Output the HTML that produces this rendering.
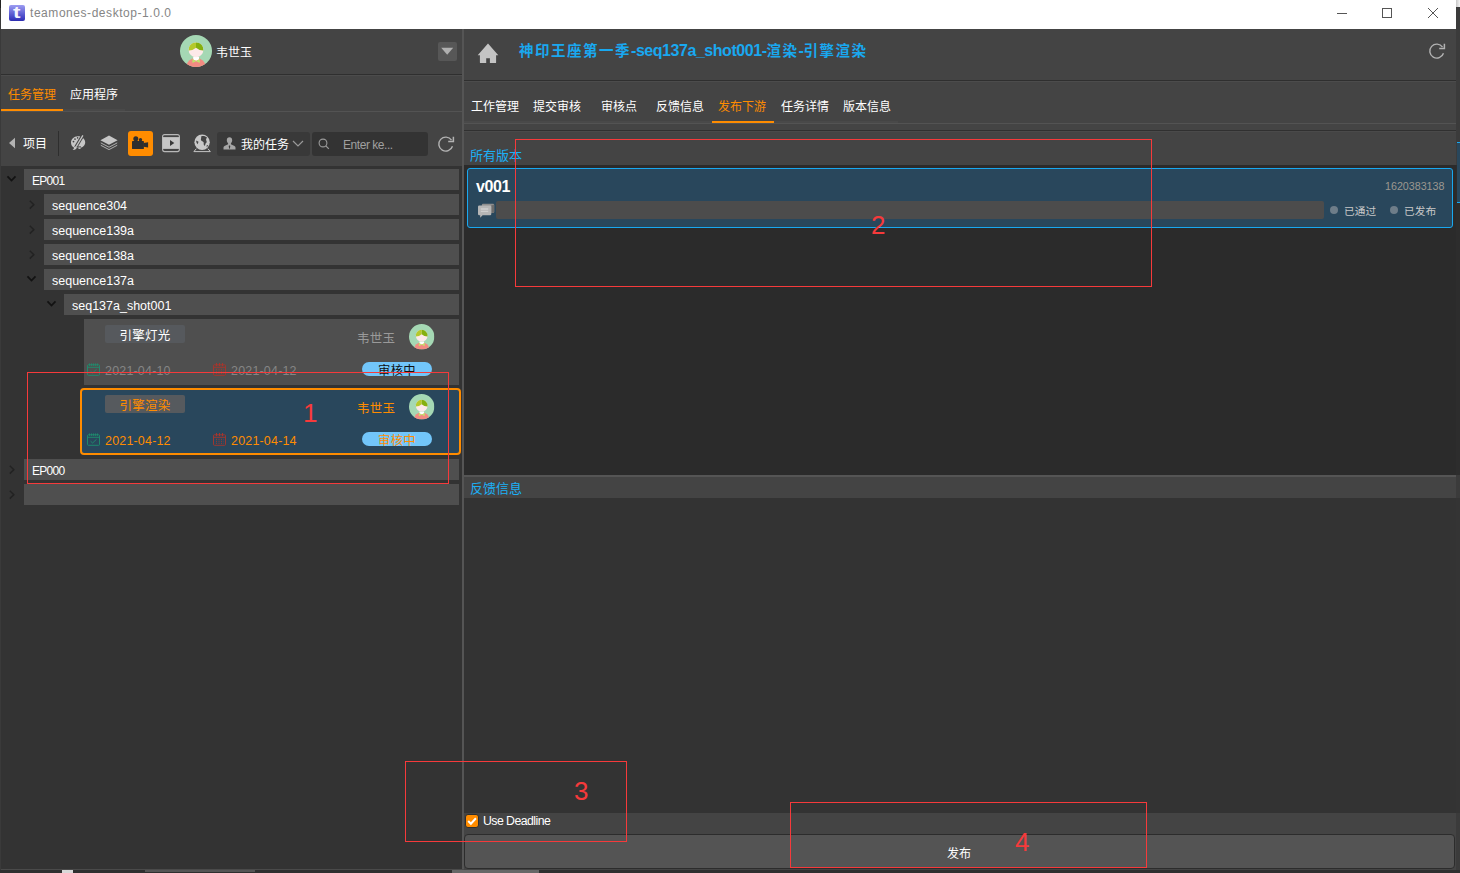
<!DOCTYPE html>
<html><head><meta charset="utf-8"><title>teamones-desktop-1.0.0</title>
<style>
*{box-sizing:border-box;margin:0;padding:0}
html,body{width:1460px;height:873px;overflow:hidden;background:#3c3c3c}
body{font-family:"Liberation Sans","Noto Sans CJK SC",sans-serif;font-size:12px;color:#fff;position:relative}
.a{position:absolute}
.t{position:absolute;white-space:nowrap;line-height:16px;height:16px;font-size:12px}
.row{position:absolute;height:21px;background:#4f4f4f}
.row span{position:absolute;left:8px;top:4px;line-height:16px;font-size:12.5px;white-space:nowrap;color:#fff}
.red{position:absolute;border:1px solid #f63a3b}
.num{position:absolute;color:#f63a3b;font-size:26px;line-height:28px;height:28px}
svg{position:absolute;overflow:visible}
.lbl{position:absolute;width:80px;height:18px;background:#56595d;border-radius:2px;text-align:center;line-height:23px;font-size:12.5px;letter-spacing:.3px;overflow:hidden}
.pill{position:absolute;width:70px;height:14px;border-radius:7px;background:#72c6fa;overflow:hidden;text-align:center;font-size:12.3px;line-height:19px;letter-spacing:.4px}
.date{position:absolute;font-size:12.5px;line-height:16px;white-space:nowrap;letter-spacing:.18px}
.cj{font-size:14.5px;letter-spacing:1.5px}
.la{letter-spacing:-.45px}
</style></head><body>
<div class="a" style="left:1456px;top:0;width:4px;height:7px;background:linear-gradient(90deg,#c8c8c8,#f4f4f4)"></div>
<div class="a" style="left:1456px;top:7px;width:4px;height:863px;background:#3b3b3b"></div>
<div class="a" style="left:1456px;top:165px;width:4px;height:310px;background:#2d2d2d"></div>
<div class="a" style="left:1457px;top:142px;width:3px;height:61px;background:#29475c;border-top:1px solid #19a8f0;border-bottom:1px solid #19a8f0"></div>
<div class="a" style="left:1456px;top:498px;width:4px;height:315px;background:#343434"></div>
<div class="a" style="left:0;top:0;width:1px;height:873px;background:#3a3a3a"></div>
<div class="a" style="left:0;top:0;width:1px;height:8px;background:#222"></div>
<div class="a" style="left:0;top:870px;width:1460px;height:3px;background:#2f2f2f"></div>
<div class="a" style="left:62px;top:870px;width:11px;height:3px;background:#d8d8d8"></div>
<div class="a" style="left:452px;top:870px;width:87px;height:3px;background:#676767"></div>
<div class="a" style="left:145px;top:870px;width:110px;height:2px;background:#555"></div>
<!-- window -->
<div class="a" style="left:1px;top:0;width:1455px;height:870px;background:#444"></div>
<!-- title bar -->
<div class="a" style="left:1px;top:0;width:1455px;height:29px;background:#fff"></div>
<div class="a" style="left:9px;top:5px;width:16px;height:16px;border-radius:2px;background:linear-gradient(#9c9cf2,#3d3dc2 85%,#2c2cae);color:#f4f4ff;font-weight:bold;font-size:16px;line-height:15px;text-align:center;overflow:hidden"><span style="display:inline-block;transform:scaleX(1.4)">t</span></div>
<div class="t" style="left:30px;top:5px;color:#858585;font-size:12px;letter-spacing:.55px">teamones-desktop-1.0.0</div>
<svg style="left:1330px;top:0" width="126" height="29" viewBox="0 0 126 29"><g stroke="#555" stroke-width="1" fill="none"><path d="M7 13.5h10"/><rect x="52.5" y="8.5" width="9" height="9"/><path d="M98 8l10 10M108 8l-10 10"/></g></svg>
<!--LEFT-->
<svg width="0" height="0" style="left:0;top:0"><defs>
<symbol id="av" viewBox="0 0 32 32"><clipPath id="avc"><circle cx="16" cy="16" r="16"/></clipPath><circle cx="16" cy="16" r="16" fill="#a5d8b4"/><g clip-path="url(#avc)"><ellipse cx="16" cy="31.5" rx="9.6" ry="8.4" fill="#f28b82"/><path d="M13.2 22h5.8v2.6l-2.9 1.2-2.9-1.2z" fill="#fff"/><path d="M12.4 24l3.7 1.9 3.7-1.9v3.9l-3.7-1.6-3.7 1.6z" fill="#bfe56a"/><circle cx="16" cy="14.8" r="7.4" fill="#fde9e9"/><path d="M8.6 15.6A7.4 7.4 0 0 1 16 7.4V12.8Q13 15.6 8.6 15.6z" fill="#b4c92c"/><path d="M23.4 15.6A7.4 7.4 0 0 0 16 7.4V12.8Q19 15.6 23.4 15.6z" fill="#84b00e"/></g></symbol>
<symbol id="cal" viewBox="0 0 13 13"><g fill="none" stroke="currentColor" stroke-width=".9"><rect x=".5" y="1.800" width="12" height="10.500" rx=".8"/><path d="M.5 4.300h12"/></g></symbol>
</defs></svg>
<!-- left header -->
<svg style="left:180px;top:35px" width="32" height="32"><use href="#av"/></svg>
<div class="t" style="left:216px;top:45px;font-size:12px">韦世玉</div>
<div class="a" style="left:438px;top:42px;width:19px;height:19px;border-radius:2px;background:#575757"></div>
<svg style="left:438px;top:42px" width="19" height="19"><path d="M3.200 5.800h12l-6 7z" fill="#b0b0b0"/></svg>
<div class="a" style="left:1px;top:74px;width:461px;height:1px;background:#2f2f2f"></div>
<div class="a" style="left:1px;top:75px;width:461px;height:1px;background:#4c4c4c"></div>
<!-- left tabs -->
<div class="t" style="left:8px;top:87px;color:#ff8c00">任务管理</div>
<div class="t" style="left:70px;top:87px">应用程序</div>
<div class="a" style="left:1px;top:111px;width:461px;height:1px;background:#535353"></div>
<div class="a" style="left:63px;top:109px;width:62px;height:2px;background:#494949"></div>
<div class="a" style="left:1px;top:109px;width:62px;height:2px;background:#ff8c00"></div>
<!-- toolbar -->
<svg style="left:8px;top:137px" width="8" height="12"><path d="M1 6L7 .8v10.4z" fill="#b2b2b2"/></svg>
<div class="t" style="left:23px;top:136px">项目</div>
<div class="a" style="left:58px;top:131px;width:1px;height:25px;background:#2e2e2e"></div>
<!--ICONS-->
<svg style="left:70px;top:135px" width="16" height="16" viewBox="0 0 16 16"><path d="M7.800 1.200C3.800 1.200 1 4.200 1 7.600c0 2.700 1.300 4.600 2.800 4.800 1 .1 1.500-.5 2.300-.5s1.300.9 3.100.9c3.300 0 6-2 6-5.500S12 1.200 7.800 1.200z" fill="#c6c6c6"/><circle cx="3.500" cy="6.600" r=".9" fill="#444"/><circle cx="5" cy="4.100" r=".85" fill="#444"/><circle cx="7.600" cy="2.900" r=".8" fill="#444"/><path d="M13.200 -.4L5.300 13" stroke="#444" stroke-width="3.300"/><path d="M12.900 .3L6.200 11.700" stroke="#c6c6c6" stroke-width="1.300"/><path d="M6.200 11.300c-1.300-.4-2.300.4-2.300 1.600 0 1-.7 1.700-1.500 2 1.900.6 4-.3 4.500-2.300z" fill="#c6c6c6"/><path d="M8 11.400h3v1.400h-3z" fill="#444"/><path d="M8.400 12.500l2.200-.2.200 1.300c-.9.500-1.900.4-2.600-.1z" fill="#c6c6c6"/></svg>
<svg style="left:100px;top:135px" width="18" height="16" viewBox="0 0 18 16"><path d="M9 .6L17.600 5.200 9 9.800.4 5.200z" fill="#c6c6c6"/><path d="M.8 7.900L9 12.200l8.200-4.300M.8 10.300L9 14.600l8.200-4.300" stroke="#b4b4b4" stroke-width=".95" fill="none"/></svg>
<div class="a" style="left:128px;top:131px;width:25px;height:25px;border-radius:3px;background:#ff8c00"></div>
<svg style="left:128px;top:131px" width="25" height="25" viewBox="0 0 25 25"><g fill="#2e2e2e"><rect x="4" y="9.900" width="11.900" height="8.200" rx=".7"/><circle cx="7.800" cy="7.700" r="2.500"/><circle cx="12.500" cy="8.700" r="1.700"/><path d="M15.500 12l4.600-.7v5.200l-4.600-.7z"/></g></svg>
<svg style="left:162px;top:134px" width="18" height="18" viewBox="0 0 18 18"><rect x=".6" y=".6" width="16.800" height="17" rx="2" fill="none" stroke="#b8b8b8" stroke-width="1.100"/><rect x=".6" y="3.100" width="16.800" height="11.800" fill="#c6c6c6"/><path d="M8 5.900v6.200l4.300-3.100z" fill="#3a3a3a"/></svg>
<svg style="left:193px;top:134px" width="18" height="18" viewBox="0 0 18 18"><circle cx="9.100" cy="8.200" r="7.700" fill="#c8c8c8"/><path d="M8.300 2.300c2-.7 4.300-.1 5.800 1.400-.9.700-1.300 1.700-.8 2.700.6 1.100.5 2-.3 2.700-.8.700-.5 1.800-1.200 2.700-.9-.5-1.300-1.500-1.100-2.600.2-1-.6-1.600-1.500-2C8.200 6.700 7.600 5.900 8 4.900c.3-.8.100-1.700.3-2.600z" fill="#444"/><path d="M3.200 6.500l2.300 1.300-.9 2.400C3.700 9.300 3.100 7.900 3.200 6.500z" fill="#444"/><path d="M13.700 11.300l1.500-.4c-.3.900-.8 1.700-1.500 2.300z" fill="#444"/><path d="M3.300 14.700L.9 17.600h16.400l-2.400-2.900" fill="none" stroke="#c4c4c4" stroke-width="1"/></svg>
<!--/ICONS-->
<div class="a" style="left:217px;top:132px;width:93px;height:24px;border-radius:3px;background:#393939"></div>
<svg style="left:223px;top:137px" width="13" height="13" viewBox="0 0 13 13"><path d="M6.5 0.3c1.7 0 2.7 1.3 2.7 3 0 1.400-.7 2.500-1.300 3.100v.8l3.600 1.700c.7.400 1 1 1 1.700v1.900H.5v-1.900c0-.7.300-1.300 1-1.700l3.600-1.700v-.8C4.500 5.800 3.800 4.700 3.800 3.300c0-1.700 1-3 2.700-3z" fill="#a6a6a6"/><path d="M6.500 8.200l.8.800-.5 2.700h-.6l-.5-2.700z" fill="#393939"/></svg>
<div class="t" style="left:241px;top:137px">我的任务</div>
<svg style="left:292px;top:140px" width="12" height="8"><path d="M1 1l5 5 5-5" fill="none" stroke="#9a9a9a" stroke-width="1.200"/></svg>
<div class="a" style="left:312px;top:132px;width:116px;height:24px;border-radius:3px;background:#333"></div>
<svg style="left:318px;top:138px" width="12" height="12" viewBox="0 0 12 12"><circle cx="5" cy="5" r="3.900" fill="none" stroke="#9a9a9a" stroke-width="1.100"/><path d="M7.800 7.800l3 3" stroke="#9a9a9a" stroke-width="1.200"/></svg>
<div class="t" style="left:343px;top:137px;color:#a0a0a0;font-size:12px;letter-spacing:-.45px">Enter ke...</div>
<svg style="left:437px;top:135px" width="17" height="17" viewBox="0 0 17 17"><path d="M14.530 5.080A7 7 0 1 0 15.460 11.260" fill="none" stroke="#b2b2b2" stroke-width="1.400"/><path d="M16.400 1.800v4.600h-5.200" fill="none" stroke="#b2b2b2" stroke-width="1.500"/></svg>
<!-- tree -->
<div class="a" style="left:1px;top:166px;width:461px;height:704px;background:#333"></div>
<!--TREE-->
<div class="row" style="left:24px;top:169px;width:435px"><span style="font-size:12px;letter-spacing:-.7px">EP001</span></div>
<div class="row" style="left:44px;top:194px;width:415px"><span>sequence304</span></div>
<div class="row" style="left:44px;top:219px;width:415px"><span>sequence139a</span></div>
<div class="row" style="left:44px;top:244px;width:415px"><span>sequence138a</span></div>
<div class="row" style="left:44px;top:269px;width:415px"><span>sequence137a</span></div>
<div class="row" style="left:64px;top:294px;width:395px"><span>seq137a_shot001</span></div>
<div class="row" style="left:24px;top:459px;width:435px"><span style="font-size:12px;letter-spacing:-.7px">EP000</span></div>
<div class="row" style="left:24px;top:484px;width:435px"></div>
<svg style="left:0;top:166px" width="70" height="340" viewBox="0 166 70 340"><g fill="none" stroke="#121212" stroke-width="1.700"><path d="M7.500 176.300l4 4.300 4-4.300"/><path d="M27.500 276.300l4 4.300 4-4.300"/><path d="M47.500 301.300l4 4.300 4-4.300"/></g><g fill="none" stroke="#222" stroke-width="1.500"><path d="M29.800 200.800l4 3.900-4 3.900"/><path d="M29.800 225.800l4 3.900-4 3.900"/><path d="M29.800 250.800l4 3.900-4 3.900"/><path d="M9.800 465.800l4 3.900-4 3.900"/><path d="M9.800 490.800l4 3.900-4 3.900"/></g></svg>
<!-- card 1 -->
<div class="a" style="left:84px;top:319px;width:375px;height:66px;background:#4f4f4f"></div>
<div class="lbl" style="left:105px;top:325px">引擎灯光</div>
<div class="t" style="left:357px;top:331px;color:#9a9a9a;font-size:12.500px;letter-spacing:.3px">韦世玉</div>
<svg style="left:408.700px;top:323.800px" width="25.400" height="25.400"><use href="#av"/></svg>
<svg style="left:87px;top:363px;color:#1e8e6e" width="13" height="13"><use href="#cal"/><path d="M2.500 .4v2.400M4.500 .4v2.400M6.500 .4v2.400M8.500 .4v2.400M10.500 .4v2.400" stroke="#1e8e6e" stroke-width=".8"/><path d="M3.600 8.200l2 1.800 3.900-3.700" fill="none" stroke="#1e8e6e" stroke-width=".9"/></svg>
<div class="date" style="left:105px;top:363px;color:#858585">2021-04-10</div>
<svg style="left:213px;top:363px;color:#a8352b" width="13" height="13"><use href="#cal"/><path d="M3.500 0v3.200M6.500 0v3.200M9.500 0v3.200" stroke="#a8352b" stroke-width="1"/><path d="M3 6.300h8M3 8.300h8M3 10.300h8" stroke="#a8352b" stroke-width="1" stroke-dasharray="1 1.500" fill="none"/></svg>
<div class="date" style="left:231px;top:363px;color:#858585">2021-04-12</div>
<div class="pill" style="left:362px;top:362px;color:#111">审核中</div>
<!-- card 2 selected -->
<div class="a" style="left:80px;top:388px;width:381px;height:67px;background:#29475c;border:2px solid #ff8c00;border-radius:4px"></div>
<div class="lbl" style="left:105px;top:395px;color:#ff8c00;background:#565a5e">引擎渲染</div>
<div class="t" style="left:357px;top:401px;color:#ff8c00;font-size:12.500px;letter-spacing:.3px">韦世玉</div>
<svg style="left:408.700px;top:393.500px" width="25.400" height="25.400"><use href="#av"/></svg>
<svg style="left:87px;top:433px;color:#1e8e6e" width="13" height="13"><use href="#cal"/><path d="M2.500 .4v2.400M4.500 .4v2.400M6.500 .4v2.400M8.500 .4v2.400M10.500 .4v2.400" stroke="#1e8e6e" stroke-width=".8"/><path d="M3.600 8.200l2 1.800 3.900-3.700" fill="none" stroke="#1e8e6e" stroke-width=".9"/></svg>
<div class="date" style="left:105px;top:433px;color:#ff8c00">2021-04-12</div>
<svg style="left:213px;top:433px;color:#a8352b" width="13" height="13"><use href="#cal"/><path d="M3.500 0v3.200M6.500 0v3.200M9.500 0v3.200" stroke="#a8352b" stroke-width="1"/><path d="M3 6.300h8M3 8.300h8M3 10.300h8" stroke="#a8352b" stroke-width="1" stroke-dasharray="1 1.500" fill="none"/></svg>
<div class="date" style="left:231px;top:433px;color:#ff8c00">2021-04-14</div>
<div class="pill" style="left:362px;top:432px;color:#ff8c00">审核中</div>
<!-- splitter -->
<div class="a" style="left:462px;top:29px;width:2px;height:841px;background:#555"></div>
<!--/TREE-->
<!--/LEFT-->
<!--RIGHT-->
<!-- right header -->
<svg style="left:470px;top:36px" width="40" height="34" viewBox="470 36 40 34"><path d="M488 43.500L498.300 55.200H496.100V62.400q0 .7-.7.7H489.900V58.200H486.200V63.100H480.600q-.7 0-.7-.7V55.200H477.700z" fill="#c4c4c4"/></svg>
<div class="t" style="left:519px;top:40px;height:22px;line-height:22px;font-size:16px;font-weight:bold;color:#19a8f0"><span class="cj">神印王座第一季</span><span class="la">-seq137a_shot001-</span><span class="cj">渲染</span><span class="la">-</span><span class="cj">引擎渲染</span></div>
<svg style="left:1428px;top:42px" width="17" height="17" viewBox="0 0 17 17"><path d="M14.530 5.080A7 7 0 1 0 15.460 11.260" fill="none" stroke="#b2b2b2" stroke-width="1.400"/><path d="M16.400 1.800v4.600h-5.200" fill="none" stroke="#b2b2b2" stroke-width="1.500"/></svg>
<div class="a" style="left:464px;top:80px;width:992px;height:1px;background:#2f2f2f"></div>
<div class="a" style="left:464px;top:81px;width:992px;height:1px;background:#4c4c4c"></div>
<!-- right tabs -->
<div class="t" style="left:471px;top:99px">工作管理</div>
<div class="t" style="left:533px;top:99px">提交审核</div>
<div class="t" style="left:601px;top:99px">审核点</div>
<div class="t" style="left:656px;top:99px">反馈信息</div>
<div class="t" style="left:718px;top:99px;color:#ff8c00">发布下游</div>
<div class="t" style="left:781px;top:99px">任务详情</div>
<div class="t" style="left:843px;top:99px">版本信息</div>
<div class="a" style="left:464px;top:123px;width:992px;height:1px;background:#535353"></div>
<div class="a" style="left:464px;top:121px;width:434px;height:2px;background:#494949"></div>
<div class="a" style="left:712px;top:121px;width:62px;height:2px;background:#ff8c00"></div>
<div class="a" style="left:464px;top:130px;width:992px;height:1px;background:#303030"></div>
<div class="a" style="left:464px;top:131px;width:992px;height:1px;background:#4a4a4a"></div>
<!-- versions -->
<div class="t" style="left:470px;top:148px;font-size:13px;color:#1cb0f6">所有版本</div>
<div class="a" style="left:464px;top:165px;width:992px;height:310px;background:#2b2b2b"></div>
<div class="a" style="left:467px;top:168px;width:986px;height:60px;background:#29475c;border:1px solid #19a8f0;border-radius:3px"></div>
<div class="t" style="left:476px;top:177px;height:20px;line-height:20px;font-size:16px;font-weight:bold;letter-spacing:-.4px">v001</div>
<svg style="left:478px;top:203px" width="17" height="16" viewBox="0 0 17 16"><rect x="3.800" y=".8" width="12.400" height="9.200" rx="1.200" fill="#8e8e8e"/><path d="M13.300 2.600l2.900-1v8l-2.900.4z" fill="#6c6c6c"/><path d="M1.200 2.600h10.900q1.200 0 1.200 1.200v7.300q0 1.200-1.200 1.200H4.600L2.200 14.700V12.300H1.200Q0 12.300 0 11.100V3.800Q0 2.600 1.200 2.600z" fill="#b6b6b6"/><path d="M2.800 6h7.400M2.800 8.400h7.400" stroke="#cfcfcf" stroke-width="1.300"/></svg>
<div class="a" style="left:496px;top:201px;width:828px;height:18px;background:#4c4c4c;border-radius:2px"></div>
<div class="t" style="left:1385px;top:178px;color:#9c9890;font-size:10.700px">1620383138</div>
<div class="a" style="left:1330px;top:206px;width:8px;height:8px;border-radius:4px;background:#6e7d89"></div>
<div class="t" style="left:1344px;top:203px;color:#c8c8c8;font-size:10.700px">已通过</div>
<div class="a" style="left:1390px;top:206px;width:8px;height:8px;border-radius:4px;background:#6e7d89"></div>
<div class="t" style="left:1404px;top:203px;color:#c8c8c8;font-size:10.700px">已发布</div>
<!-- feedback -->
<div class="a" style="left:464px;top:475px;width:992px;height:2px;background:#555"></div>
<div class="t" style="left:470px;top:481px;font-size:13px;color:#1cb0f6">反馈信息</div>
<div class="a" style="left:464px;top:498px;width:992px;height:315px;background:#333"></div>
<!-- bottom -->
<div class="a" style="left:465px;top:814px;width:14px;height:14px;border-radius:3px;background:#ff8c00;border:1px solid #2e2e2e"></div>
<svg style="left:465px;top:814px" width="14" height="14" viewBox="0 0 14 14"><path d="M3.200 7l2.700 2.700 5-5.400" fill="none" stroke="#fff" stroke-width="2"/></svg>
<div class="t" style="left:483px;top:813px;font-size:12.300px;letter-spacing:-.55px">Use Deadline</div>
<div class="a" style="left:464px;top:834px;width:991px;height:35px;background:#545454;border:1px solid #2c2c2c;border-radius:4px"></div>
<div class="t" style="left:947px;top:846px">发布</div>
<div class="a" style="left:1px;top:869px;width:463px;height:1px;background:#4a4a4a"></div>
<!--/RIGHT-->
<!--ANNOT-->
<div class="red" style="left:27px;top:372px;width:422px;height:112px"></div>
<div class="red" style="left:515px;top:139px;width:637px;height:148px"></div>
<div class="red" style="left:405px;top:761px;width:222px;height:81px"></div>
<div class="red" style="left:790px;top:802px;width:357px;height:66px"></div>
<div class="num" style="left:303px;top:399px">1</div>
<div class="num" style="left:871px;top:211px">2</div>
<div class="num" style="left:574px;top:777px">3</div>
<div class="num" style="left:1015px;top:828px">4</div>
<!--/ANNOT-->
</body></html>
